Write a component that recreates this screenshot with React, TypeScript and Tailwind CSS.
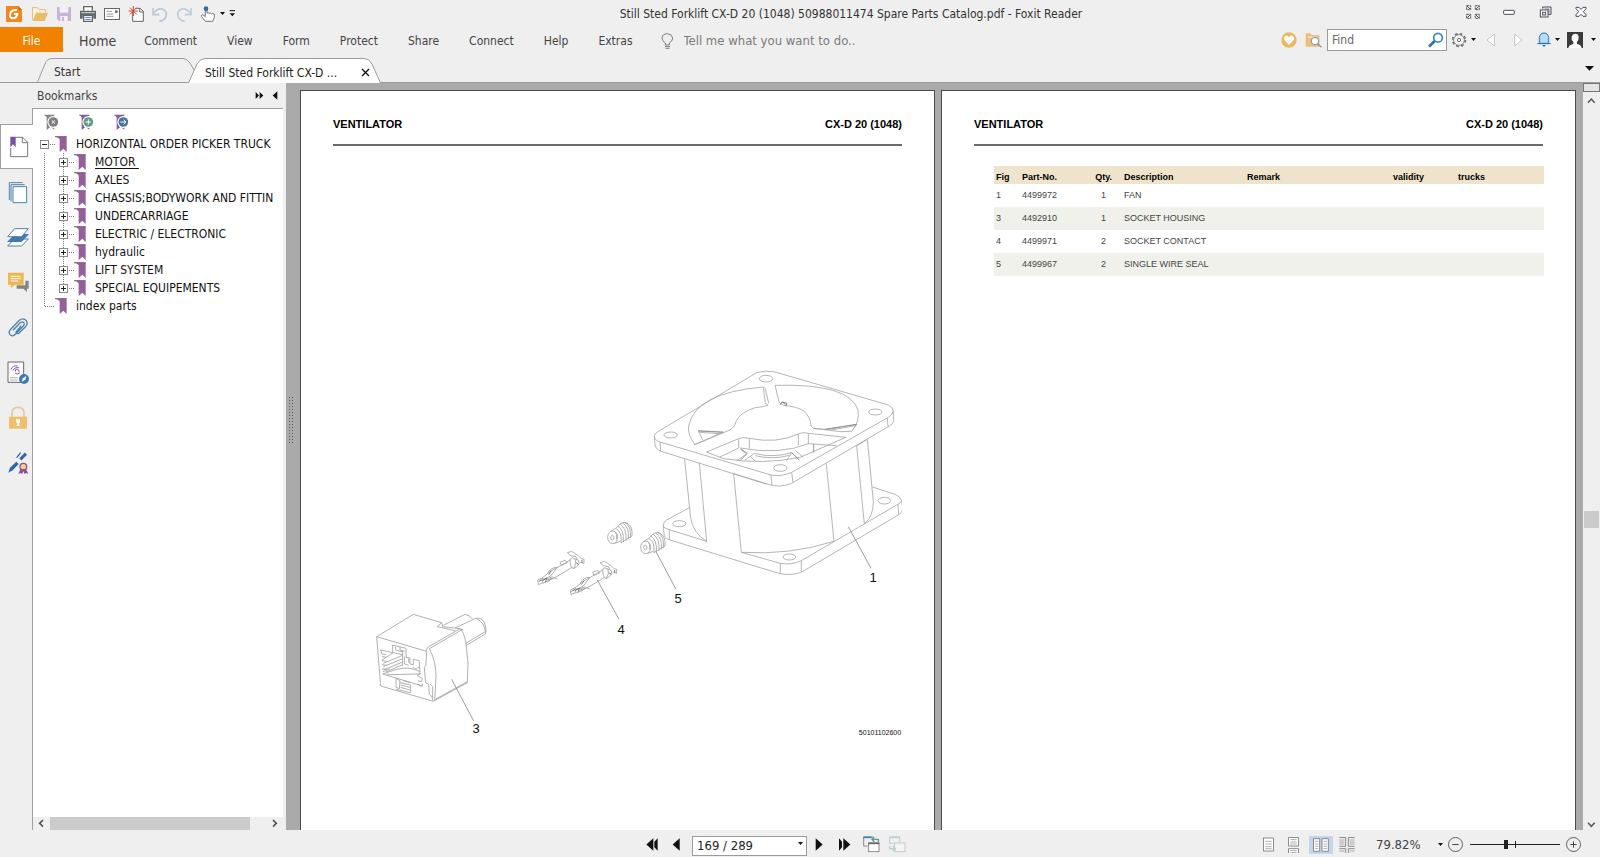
import React from 'react';

type GlyphProps = { w: number; h: number; children: React.ReactNode };

/* Small drawing canvas: three drawing units to every pixel. */
function Glyph({ w, h, children }: GlyphProps) {
  return (
    <svg width={w} height={h} viewBox={`0 0 ${w * 3} ${h * 3}`} fill="none" className="block shrink-0" aria-hidden="true">
      {children}
    </svg>
  );
}

function IconButton({ label, className = '', children }: { label: string; className?: string; children: React.ReactNode }) {
  return (
    <button type="button" aria-label={label} className={`flex shrink-0 items-center justify-center ${className}`}>
      {children}
    </button>
  );
}

function Caret() {
  return (
    <Glyph w={5} h={3}>
      <path d="M0 0H15L7.500 9Z" fill="#111" />
    </Glyph>
  );
}

function TitleBar() {
  return (
    <header className="flex h-[27px] items-center pr-3 pl-1.5">
      <div className="flex items-center gap-2">
        <Glyph w={16} h={16}>
          <rect width="48" height="48" fill="#f5861f" />
          <path d="M38 0H48V12Z" fill="#fff" />
          <path d="M38 0V12H48Z" fill="#c86a12" />
          <path d="M33 12Q14 10 12 26Q11 37 22 37Q32 36 34 24H24" stroke="#fff" strokeWidth="6" />
        </Glyph>
        <IconButton label="Open" className="ml-0.5">
          <Glyph w={16} h={16}>
            <path d="M1 43V5H17L22 11H41V20" fill="#fbf3e2" stroke="#e3b96c" strokeWidth="3" />
            <path d="M2 45L12 20H48L38 45Z" fill="#e9bc6c" />
          </Glyph>
        </IconButton>
        <IconButton label="Save">
          <Glyph w={16} h={16}>
            <path d="M3 3H45V45H9L3 39Z" fill="#c6b3d6" />
            <path d="M11 3H37V20H11Z" fill="#f3eef7" />
            <path d="M13 30H35V45H13Z" fill="#f3eef7" />
            <path d="M18 33H24V45H18Z" fill="#c6b3d6" />
          </Glyph>
        </IconButton>
        <IconButton label="Print">
          <Glyph w={16} h={16}>
            <path d="M11 14V2H37V14" fill="#fff" stroke="#666" strokeWidth="4" />
            <path d="M0 14H48V38H40V28H8V38H0Z" fill="#666" />
            <path d="M4 18H44V22H4Z" fill="#a9c6de" />
            <path d="M11 28H37V46H11Z" fill="#fff" stroke="#666" strokeWidth="4" />
            <path d="M16 34H32M16 40H32" stroke="#4a86b8" strokeWidth="3" />
          </Glyph>
        </IconButton>
        <IconButton label="Email">
          <Glyph w={16} h={16}>
            <rect x="1.500" y="7.500" width="45" height="33" fill="#fff" stroke="#666" strokeWidth="3" />
            <path d="M8 16H24M8 24H28M8 31H28" stroke="#888" strokeWidth="2.500" />
            <path d="M33 13H41V21H33Z" fill="#777" />
          </Glyph>
        </IconButton>
        <IconButton label="New">
          <Glyph w={16} h={16}>
            <path d="M14 16V46H46V16L36 7H22" fill="#fff" stroke="#666" strokeWidth="3" />
            <path d="M35 7V18H46" stroke="#666" strokeWidth="3" />
            <path d="M16 0V30M2 15H30M6 5L26 25M26 5L6 25" stroke="#d5432f" strokeWidth="3" />
          </Glyph>
        </IconButton>
        <IconButton label="Undo">
          <Glyph w={16} h={16}>
            <path d="M6 20Q18 4 34 10Q48 20 40 36Q35 44 22 46" stroke="#b9c7da" strokeWidth="5" />
            <path d="M3 6V26H22" stroke="#b9c7da" strokeWidth="5" />
          </Glyph>
        </IconButton>
        <IconButton label="Redo">
          <Glyph w={16} h={16}>
            <path d="M42 20Q30 4 14 10Q0 20 8 36Q13 44 26 46" stroke="#bccdd9" strokeWidth="5" />
            <path d="M45 6V26H26" stroke="#bccdd9" strokeWidth="5" />
          </Glyph>
        </IconButton>
        <div className="flex items-center gap-1">
          <IconButton label="Hand">
            <Glyph w={16} h={16}>
              <path d="M16 8V32L8 26Q3 26 5 32L16 46H38L43 34V24Q36 20 34 24Q30 18 27 22Q23 18 21 22V8Q18 4 16 8Z" fill="#fff" stroke="#777" strokeWidth="3" />
              <circle cx="18" cy="8" r="7" fill="#2f6ea5" />
            </Glyph>
          </IconButton>
          <Caret />
          <Glyph w={7} h={7}>
            <path d="M2 2H18" stroke="#111" strokeWidth="3" />
            <path d="M2 10H18L10 19Z" fill="#111" />
          </Glyph>
        </div>
      </div>
      <h1 className="flex-1 text-center text-[12px] leading-4 text-[#333]">
        Still Sted Forklift CX-D 20 (1048) 50988011474 Spare Parts Catalog.pdf - Foxit Reader
      </h1>
      <div className="flex items-center gap-[22px] pb-1">
        <IconButton label="Full screen">
          <Glyph w={14} h={14}>
            <path d="M2 2H14V14H2ZM28 2H40V14H28ZM2 28H14V40H2ZM28 28H40V40H28Z" stroke="#555" strokeWidth="3" strokeDasharray="7 2" />
            <path d="M4 4L12 12M38 4L30 12M4 38L12 30M38 38L30 30" stroke="#555" strokeWidth="3" />
          </Glyph>
        </IconButton>
        <IconButton label="Minimize">
          <Glyph w={14} h={14}>
            <rect x="5" y="16" width="32" height="12" rx="2" fill="#fff" stroke="#4a4a5c" strokeWidth="3" />
          </Glyph>
        </IconButton>
        <IconButton label="Restore">
          <Glyph w={14} h={14}>
            <path d="M14 11V6H39V28H30" stroke="#4a4a5c" strokeWidth="3" />
            <path d="M20 12H33V24" stroke="#4a4a5c" strokeWidth="2" />
            <rect x="7" y="15" width="23" height="21" fill="#fff" stroke="#4a4a5c" strokeWidth="3" />
            <rect x="14" y="22" width="9" height="8" stroke="#4a4a5c" strokeWidth="3" />
          </Glyph>
        </IconButton>
        <IconButton label="Close">
          <Glyph w={14} h={14}>
            <path d="M6 7H15L21 13L27 7H36V11L28 20L36 29V34H27L21 28L15 34H6V29L14 20L6 11Z" fill="#fff" stroke="#4a4a5c" strokeWidth="3" />
          </Glyph>
        </IconButton>
      </div>
    </header>
  );
}

const MENU = ['Comment', 'View', 'Form', 'Protect', 'Share', 'Connect', 'Help', 'Extras'];

function MenuBar() {
  return (
    <div className="flex h-[25px] items-center pr-1">
      <nav className="flex items-center gap-[30px] text-[12px] text-[#444]">
        <button type="button" className="-mr-3.5 h-[25px] w-[63px] bg-[#f08200] pt-0.5 text-white">File</button>
        <button type="button" className="-mr-0.5 pt-0.5 text-[14px] leading-5">Home</button>
        {MENU.map((m) => (
          <button type="button" key={m} className="pt-0.5">{m}</button>
        ))}
      </nav>
      <label className="ml-7 flex flex-1 items-center gap-2.5 pt-0.5">
        <Glyph w={13} h={16}>
          <path d="M13 36V30Q3 24 3 15Q5 2 19 2Q33 3 35 15Q35 24 25 30V36Z" stroke="#666" strokeWidth="2.500" />
          <path d="M12 41H27M14 46H25" stroke="#666" strokeWidth="2.500" />
        </Glyph>
        <input aria-label="Tell me what you want to do" placeholder="Tell me what you want to do.." className="w-56 bg-transparent text-[13px] leading-4 outline-none placeholder:text-[#7b7b7b]" />
      </label>
      <div className="flex items-center gap-2">
        <IconButton label="Favourites">
          <Glyph w={16} h={16}>
            <circle cx="24" cy="24" r="23" fill="#edb75e" />
            <path d="M24 39L10 24Q6 14 15 11Q21 10 24 16Q27 10 33 11Q42 14 38 24Z" fill="#fff" />
          </Glyph>
        </IconButton>
        <IconButton label="Search folder">
          <Glyph w={17} h={16}>
            <path d="M2 4H16L20 9H43V44H2Z" fill="#ecc07b" />
            <path d="M9 15H37" stroke="#f8e6c8" strokeWidth="4" />
            <circle cx="30" cy="27" r="11" fill="#fff" stroke="#9b9b9b" strokeWidth="3.500" />
            <path d="M38 35L49 46" stroke="#8f8f8f" strokeWidth="4" />
          </Glyph>
        </IconButton>
        <div className="-ml-[3px] flex h-[22px] w-[120px] items-center border border-[#9b9b9b] bg-white pr-0.5 pl-1">
          <input aria-label="Find" placeholder="Find" className="w-0 flex-1 bg-transparent text-[12px] outline-none placeholder:text-[#666]" />
          <IconButton label="Search">
            <Glyph w={16} h={16}>
              <circle cx="30" cy="17" r="13" stroke="#3f86b8" strokeWidth="5" />
              <path d="M20 27L3 44" stroke="#2f6ea5" strokeWidth="8" />
            </Glyph>
          </IconButton>
        </div>
      </div>
      <div className="ml-1 flex items-center">
        <IconButton label="Settings">
          <Glyph w={16} h={16}>
            <circle cx="24" cy="24" r="19" stroke="#444" strokeWidth="5" strokeDasharray="7.460 7.460" />
            <circle cx="24" cy="24" r="16" fill="#f4f4f4" stroke="#555" strokeWidth="2" />
            <circle cx="24" cy="24" r="19" stroke="#f4f4f4" strokeWidth="2" strokeDasharray="4 10.920" strokeDashoffset="-1.700" />
            <circle cx="24" cy="24" r="5" stroke="#555" strokeWidth="2.500" />
          </Glyph>
        </IconButton>
        <span className="w-1" />
        <Caret />
        <IconButton label="Previous" className="ml-2.5">
          <Glyph w={9} h={14}>
            <path d="M25 3V39L3 21Z" fill="#fff" stroke="#aaa" strokeWidth="2" />
          </Glyph>
        </IconButton>
        <IconButton label="Next" className="ml-[19px]">
          <Glyph w={9} h={14}>
            <path d="M2 3V39L24 21Z" fill="#fff" stroke="#aaa" strokeWidth="2" />
          </Glyph>
        </IconButton>
        <IconButton label="Notifications" className="mr-1 ml-3.5">
          <Glyph w={14} h={15}>
            <path d="M7 34V17Q9 3 21 3Q33 3 35 17V34Z" fill="#b4dcf6" stroke="#2f6ea5" strokeWidth="3" />
            <path d="M1 35H41" stroke="#2f6ea5" strokeWidth="3" />
            <path d="M15 39H27L21 45Z" fill="#2f6ea5" />
          </Glyph>
        </IconButton>
        <Caret />
        <IconButton label="Account" className="mr-2 ml-[7px]">
          <Glyph w={16} h={16}>
            <rect width="48" height="48" fill="#3b3b3b" />
            <path d="M4 48Q5 39 19 36V30Q12 24 14 14Q17 5 25 5Q35 6 35 16Q35 25 30 30V36Q42 38 44 48Z" fill="#fff" />
          </Glyph>
        </IconButton>
        <Caret />
      </div>
    </div>
  );
}

function TabStrip() {
  return (
    <div className="flex h-[31px] items-end border-b border-[#9b9b9b] pr-1.5 pl-[37px]">
      <button type="button" className="relative h-6 w-[157px] pt-1 pl-[17px] text-left text-[12px] text-[#333]">
        <svg viewBox="0 0 157 24" preserveAspectRatio="none" fill="none" className="absolute inset-0 size-full" aria-hidden="true">
          <path d="M0.500 24L8 6Q10 0.500 15 0.500H146Q150 0.500 153 5L157 12" stroke="#9b9b9b" />
        </svg>
        <span className="relative">Start</span>
      </button>
      <div className="relative -mb-px -ml-1.5 flex h-[25px] w-[193px] items-center pt-1 pr-[11px] pl-[17px] text-[12px] text-[#222]">
        <svg viewBox="0 0 193 25" preserveAspectRatio="none" className="absolute inset-0 size-full" aria-hidden="true">
          <path d="M0.500 25L9 6Q12 0.500 17 0.500H176Q181 0.500 184 6L192.500 25" fill="#fff" stroke="#9b9b9b" />
        </svg>
        <span className="relative flex-1">Still Sted Forklift CX-D ...</span>
        <IconButton label="Close tab" className="relative">
          <Glyph w={9} h={9}>
            <path d="M3 3L24 24M24 3L3 24" stroke="#111" strokeWidth="4" />
          </Glyph>
        </IconButton>
      </div>
      <IconButton label="Tab list" className="mb-[11px] ml-auto">
        <Glyph w={9} h={5}>
          <path d="M0 0H27L13.500 14Z" fill="#111" />
        </Glyph>
      </IconButton>
    </div>
  );
}

const RAIL: { label: string; icon: React.ReactNode }[] = [
  {
    label: 'Bookmarks',
    icon: (
      <Glyph w={20} h={23}>
        <path d="M19 4H41L56 19V62H5V36" fill="#fff" stroke="#777" strokeWidth="3" />
        <path d="M40 4V20H56" stroke="#777" strokeWidth="3" />
        <path d="M4 2H20V34L12 25L4 34Z" fill="#7b4f9f" />
      </Glyph>
    ),
  },
  {
    label: 'Pages',
    icon: (
      <Glyph w={20} h={22}>
        <path d="M4 54V2H44M9 58V8H50" stroke="#4f81b0" strokeWidth="3" />
        <path d="M15 14H56V62H15Z" fill="#fff" stroke="#4f81b0" strokeWidth="3" />
      </Glyph>
    ),
  },
  {
    label: 'Layers',
    icon: (
      <Glyph w={22} h={20}>
        <path d="M2 54L22 33H64L44 54Z" fill="#fff" stroke="#4f81b0" strokeWidth="3" />
        <path d="M0 42L23 18H66L44 42Z" fill="#3f7ab3" />
        <path d="M2 26L23 2H64L44 26Z" fill="#fff" stroke="#4f81b0" strokeWidth="3" />
      </Glyph>
    ),
  },
  {
    label: 'Comments',
    icon: (
      <Glyph w={21} h={21}>
        <path d="M52 26H62V50H57V60L46 50H26V40H52Z" fill="#858585" />
        <path d="M0 2H47V38H20L9 48V38H0Z" fill="#eeb550" />
        <path d="M8 13H38M8 20H38M8 27H30" stroke="#fff" strokeWidth="3" />
      </Glyph>
    ),
  },
  {
    label: 'Attachments',
    icon: (
      <Glyph w={20} h={20}>
        <path d="M15 37L36 15Q44 8 48 15Q50 20 45 25L22 49Q13 58 6 50Q0 42 8 34L34 7Q46-2 55 8Q61 18 52 27L32 46Q25 49 24 42L40 23" stroke="#4f81b0" strokeWidth="4" />
      </Glyph>
    ),
  },
  {
    label: 'Signatures',
    icon: (
      <Glyph w={23} h={23}>
        <path d="M3 3H50V64H3Z" fill="#fff" stroke="#666" strokeWidth="3" />
        <path d="M12 26Q16 12 32 15M18 29Q21 18 36 20M26 32Q22 25 30 24Q38 25 36 34M24 36Q30 42 38 36" stroke="#9257ad" strokeWidth="3" />
        <path d="M9 50H32M9 57H32" stroke="#888" strokeWidth="2" />
        <circle cx="51" cy="54" r="15" fill="#3f7ab3" />
        <path d="M44 62L47 52L58 45L55 56Z" fill="#fff" />
      </Glyph>
    ),
  },
  {
    label: 'Security',
    icon: (
      <Glyph w={18} h={23}>
        <path d="M9 33V20Q10 4 27 4Q44 4 45 20V33" stroke="#e5c99a" strokeWidth="5" />
        <path d="M0 32H54V68H0Z" fill="#efbf6c" />
        <path d="M22 40H33V50L30 51L32 60H23L25 51L22 50Z" fill="#fff" />
      </Glyph>
    ),
  },
  {
    label: 'Digital sign',
    icon: (
      <Glyph w={21} h={23}>
        <path d="M37 25L54 8" stroke="#2f68a8" strokeWidth="9" />
        <path d="M26 20L38 5" stroke="#2f68a8" strokeWidth="4" />
        <path d="M1 65L6 50L25 32L32 39L14 58Z" fill="#2f68a8" />
        <circle cx="46" cy="47" r="10" fill="#f7cf83" stroke="#8b4f9f" strokeWidth="4" />
        <path d="M37 54L31 69L38 66L43 69L46 60L50 69L55 66L61 69L54 54Z" fill="#8b4f9f" />
      </Glyph>
    ),
  },
];

function Rail() {
  return (
    <nav aria-label="Panels" className="flex w-8 shrink-0 flex-col pt-[41px]">
      {RAIL.map((r, i) => (
        <IconButton
          key={r.label}
          label={r.label}
          className={i === 0 ? 'relative z-10 -mr-px h-[45px] border-y border-l border-[#a0a0a0] bg-white pt-0.5 pl-1' : 'h-[45px] pt-0.5 pl-1'}
        >
          {r.icon}
        </IconButton>
      ))}
    </nav>
  );
}

function Flag() {
  return (
    <Glyph w={12} h={18}>
      <path d="M0 4H35V51L25 41L14 51V13Q9 6 0 6Z" fill="#93609a" />
      <path d="M0 5H35" stroke="#7d5a83" strokeWidth="2" />
    </Glyph>
  );
}

const DOT = { stroke: '#777', strokeWidth: 3, strokeDasharray: '3 3' };

function Guide({ last = false }: { last?: boolean }) {
  return (
    <Glyph w={last ? 22 : 19} h={18}>
      <path d={last ? 'M34.500 0V27' : 'M34.500 0V54'} {...DOT} />
      {last && <path d="M36 28.500H66" {...DOT} />}
    </Glyph>
  );
}

function Expander({ open = false, top = true, bottom = true, name }: { open?: boolean; top?: boolean; bottom?: boolean; name: string }) {
  return (
    <button type="button" aria-label={`${open ? 'Collapse' : 'Expand'} ${name}`} aria-expanded={open}>
      <Glyph w={22} h={18}>
        {top && <path d="M34.500 0V15" {...DOT} />}
        {bottom && <path d="M34.500 42V54" {...DOT} />}
        <path d="M51 28.500H66" {...DOT} />
        <rect x="22.500" y="16.500" width="24" height="24" fill="#fff" stroke="#8a8a8a" strokeWidth="3" />
        <path d={open ? 'M27 28.500H42' : 'M27 28.500H42M34.500 21V36'} stroke="#222" strokeWidth="3" />
      </Glyph>
    </button>
  );
}

const CHILDREN = ['MOTOR', 'AXLES', 'CHASSIS;BODYWORK AND FITTIN', 'UNDERCARRIAGE', 'ELECTRIC / ELECTRONIC', 'hydraulic', 'LIFT SYSTEM', 'SPECIAL EQUIPEMENTS'];

function BookmarkTool({ label, flag, disc, mark }: { label: string; flag: string; disc: string; mark: string }) {
  return (
    <IconButton label={label}>
      <Glyph w={15} h={17}>
        <path d="M0 2H31V47L20 38L8 48V10Q6 5 0 4Z" fill={flag} />
        <circle cx="28" cy="24" r="18" fill="#fff" />
        <circle cx="28" cy="24" r="14.500" fill={disc} />
        <path d={mark} stroke="#fff" strokeWidth="3" />
      </Glyph>
    </IconButton>
  );
}

function Bookmarks() {
  return (
    <aside className="flex w-[254px] shrink-0 flex-col pr-[3px]">
      <div className="flex h-[25px] items-center px-[5px]">
        <h2 className="flex-1 text-[12px] text-[#444]">Bookmarks</h2>
        <IconButton label="Expand panel">
          <Glyph w={9} h={9}>
            <path d="M2 3V24L12 13.500ZM14 3V24L25 13.500Z" fill="#111" />
          </Glyph>
        </IconButton>
        <IconButton label="Collapse panel" className="ml-2">
          <Glyph w={6} h={9}>
            <path d="M16 1V26L2 13.500Z" fill="#111" />
          </Glyph>
        </IconButton>
      </div>
      <div className="flex min-h-0 flex-1 flex-col overflow-hidden border-t border-l border-[#a0a0a0] bg-white">
        <div className="flex h-[26px] items-center gap-5 pl-[11px]">
          <BookmarkTool label="Delete bookmark" flag="#858585" disc="#7d7d7d" mark="M23 19L33 29M33 19L23 29" />
          <BookmarkTool label="Add bookmark" flag="#855a9f" disc="#5f9c83" mark="M20 24H36M28 16V32" />
          <BookmarkTool label="Go to bookmark" flag="#855a9f" disc="#42729f" mark="M19 24H35M29 17L36 24L29 31" />
        </div>
        <ul className="min-h-0 flex-1 text-[12px] leading-[18px] whitespace-nowrap text-[#111]">
          <li className="flex">
            <Expander open top={false} bottom={false} name="HORIZONTAL ORDER PICKER TRUCK" />
            <Flag />
            <a href="#truck" className="ml-[9px]">HORIZONTAL ORDER PICKER TRUCK</a>
          </li>
          {CHILDREN.map((c, i) => (
            <li key={c} className="flex">
              <Guide />
              <Expander name={c} bottom={i < CHILDREN.length - 1} />
              <Flag />
              <a href={`#section-${i}`} className={i === 0 ? 'ml-[9px] whitespace-pre underline underline-offset-2' : 'ml-[9px]'}>
                {i === 0 ? `${c} ` : c}
              </a>
            </li>
          ))}
          <li className="flex">
            <Guide last />
            <Flag />
            <a href="#index" className="ml-[9px]">index parts</a>
          </li>
        </ul>
        <div className="flex h-[13px] items-center justify-between bg-[#efefef] px-[5px]">
          <IconButton label="Scroll left">
            <Glyph w={6} h={9}>
              <path d="M15 3L5 13L15 23" stroke="#555" strokeWidth="5" />
            </Glyph>
          </IconButton>
          <div className="mr-[22px] ml-1.5 h-full flex-1 bg-[#cbcbcb]" />
          <IconButton label="Scroll right">
            <Glyph w={6} h={9}>
              <path d="M3 3L13 13L3 23" stroke="#555" strokeWidth="5" />
            </Glyph>
          </IconButton>
        </div>
      </div>
    </aside>
  );
}

function ContactPin() {
  return (
    <g>
      <path d="M533 150L548 143V158L535 164ZM548 143L570 125L600 108L630 90M548 160L590 140L636 112M540 148L562 146L578 140M563 130Q572 112 592 112L572 138L550 150M560 150L582 143L593 148M563 156L576 146" />
      <path d="M600 97L615 91L622 98L604 106ZM630 88Q636 80 644 86Q652 98 640 116Q630 112 630 88M644 86L656 92Q662 102 650 110L640 116M622 68L635 64L656 78L664 86L672 88V100L660 96M622 68L632 77L648 80L652 90M648 98L656 104" />
      <path d="M536 154L546 150M548 152L560 144L556 158M566 134L574 122M650 98L655 103M666 90V98" stroke="#666" />
    </g>
  );
}

function Seal() {
  return (
    <g>
      <ellipse cx="857" cy="52" rx="15" ry="19" />
      <ellipse cx="856" cy="53" rx="5" ry="7" />
      <path d="M850 35L866 25M863 70L880 64M862 34Q872 42 868 58" />
      <path d="M866 25Q886 36 882 68M872 18Q892 30 889 66M879 12Q900 26 897 62M886 8Q908 22 904 58M893 7Q914 18 910 54M900 9Q918 20 915 48M866 25L880 11Q892 4 902 10M882 68L915 48" />
    </g>
  );
}

/* Exploded view of the fan, its socket housing, contacts and seals. */
function FanDrawing() {
  return (
    <svg viewBox="333 360 569 385" className="mt-[214px] block h-auto w-full" role="img" aria-label="Exploded view of the fan" fontFamily="'Liberation Sans', Arial, sans-serif">
      <g transform="translate(640 350) scale(0.33333)" fill="none" stroke="#a6a6a6" strokeWidth="2.500" strokeLinejoin="round">
        <path d="M43 258Q43 252 52 246L350 68Q375 60 405 66L745 165Q760 172 760 185L761 212Q760 222 748 228L455 400Q420 415 380 402L60 303Q47 297 45 285Z" />
        <path d="M43 260Q45 272 60 276L393 375Q425 381 455 367L745 202Q760 192 760 182M60 276L62 304M393 375L396 406M455 367L459 398M742 204L744 230" />
        <ellipse cx="378" cy="86" rx="20" ry="10" />
        <ellipse cx="92" cy="255" rx="20" ry="9" />
        <ellipse cx="706" cy="186" rx="20" ry="9" />
        <ellipse cx="421" cy="354" rx="20" ry="10" />
        <ellipse cx="118" cy="521" rx="20" ry="9" />
        <ellipse cx="733" cy="452" rx="19" ry="10" />
        <ellipse cx="448" cy="621" rx="19" ry="9" />
        <path d="M370 111L376 160L384 165Q376 170 345 173Q298 188 288 215Q284 234 265 242L165 284Q142 254 146 228Q166 128 370 111M375 113L386 160" />
        <path d="M405 106L418 158L430 166Q472 170 490 182Q512 200 513 228Q516 236 530 236L600 245L635 244Q660 215 654 180Q630 100 405 106" />
        <path d="M421 164L426 156L441 160L437 168M428 156L436 164" stroke="#666" />
        <path d="M163 284L200 268L250 246L175 242L188 270M178 247L238 251M520 236L560 238L650 223L640 236M560 238L598 232M570 241L645 227" />
        <path d="M555 238L650 223M175 243L248 247" stroke="#888" />
        <path d="M200 306L296 266Q308 260 328 265Q410 282 475 252Q488 245 505 250L618 262L480 322Q370 345 250 326ZM296 268V294M328 265V296M475 252V286M505 250V282M300 294Q420 316 505 281L590 287M240 321L296 294M302 298L320 312L290 332M315 330L343 310Q400 325 455 308L440 332M455 308L478 330M467 302L490 322M330 318L345 333M345 317Q400 330 448 316" />
        <path d="M521 282V308M302 297L322 310M300 332L322 310M455 308L478 330" stroke="#888" />
        <path d="M134 328L152 505Q160 550 200 574L178 338M281 371L304 607Q450 616 582 574L559 341M281 371L380 402M650 288L673 521Q700 500 700 455L682 268M650 288L682 268" />
        <path d="M148 473L80 510Q69 516 70 528L73 560Q76 566 90 570L400 665Q445 682 485 666L775 495Q789 487 788 475L785 452Q780 438 765 433L697 411M70 528Q72 536 88 539L200 574M304 607L421 640Q455 646 484 632L770 465Q784 458 785 452M88 539V569M421 640V670M484 632V666M774 463L776 494" />
        <path d="M625 530L693 655" stroke="#888" />
      </g>
      <g transform="translate(360 530) scale(0.33333)" fill="none" stroke="#a0a0a0" strokeWidth="2.500" strokeLinejoin="round">
        <path d="M50 320L160 253L245 278L232 290L285 302M245 278L248 290L300 296M250 286L315 253Q332 256 338 268M285 294L345 266Q362 260 372 276Q382 300 376 312M350 266Q374 278 376 305L317 340M376 312L318 347" />
        <path d="M50 320L200 364M50 320L62 468L220 514L322 458Q328 400 318 340Q312 305 300 296L208 349Q197 354 200 364L198 405L193 412L197 458L206 463L208 493L216 500L218 512M208 356Q228 392 228 440L224 512M208 356L308 298M210 462L218 470V505M226 508L322 455M300 296L310 300" />
        <path d="M62 360L98 368V345L138 355V382L150 384V402L160 404V388L178 392L180 432L172 436L187 446L185 455L174 452M62 360L66 372L78 374M66 380L80 382M66 392L80 394M66 404L80 406M66 416L80 418M68 432L110 418Q150 408 180 425M68 432L187 468V460M68 426L90 416M80 434L182 432M172 462L187 470" />
        <path d="M66 390L100 368L128 374M70 400L128 376M70 410L128 386M70 420L128 396M78 426L128 404M128 362V408M134 380V402L146 406M146 386V398M107 350V360L128 366M120 350V360L134 364M160 412L168 418L178 410" />
        <path d="M108 445V472L118 476L120 452L108 445M120 458L152 465V488L108 478M122 465L150 472M122 472L150 480M130 452L152 458" />
        <ContactPin />
        <g transform="translate(98 30)">
          <ContactPin />
        </g>
        <Seal />
        <g transform="translate(-99 -30)">
          <Seal />
        </g>
        <path d="M275 448L341 573M712 150L777 268M888 65L948 178" stroke="#888" />
      </g>
      <g fill="#111" fontSize="13" textAnchor="middle">
        <text x="873" y="582">1</text>
        <text x="678" y="603">5</text>
        <text x="621" y="634">4</text>
        <text x="476" y="733">3</text>
        <text x="880" y="735" fontSize="7">50101102600</text>
      </g>
    </svg>
  );
}

function Sheet({ children }: { children: React.ReactNode }) {
  return (
    <article className="min-w-0 flex-1 overflow-hidden border-x border-t border-[#4a4a4a] bg-white px-8 font-['Liberation_Sans',Arial,sans-serif]">
      <div className="mt-[25px] flex justify-between border-b-2 border-[#6a6a6a] pb-3 text-[11px] leading-4 font-bold text-black">
        <h3>VENTILATOR</h3>
        <span>CX-D 20 (1048)</span>
      </div>
      {children}
    </article>
  );
}

const PARTS = [
  { fig: 1, no: '4499972', qty: 1, text: 'FAN' },
  { fig: 3, no: '4492910', qty: 1, text: 'SOCKET HOUSING' },
  { fig: 4, no: '4499971', qty: 2, text: 'SOCKET CONTACT' },
  { fig: 5, no: '4499967', qty: 2, text: 'SINGLE WIRE SEAL' },
];

function PartsTable() {
  return (
    <div className="-mr-px mt-5 pl-5">
      <table className="w-full table-fixed border-collapse text-left text-[9px] leading-[10px] text-[#444]">
        <thead className="text-black">
          <tr className="h-[18px] bg-[#efe4cb] align-bottom">
            <th scope="col" className="w-[28px] pb-0.5 pl-0.5">Fig</th>
            <th scope="col" className="w-[60px] pb-0.5">Part-No.</th>
            <th scope="col" className="w-[42px] pr-3 pb-0.5 text-right">Qty.</th>
            <th scope="col" className="w-[123px] pb-0.5">Description</th>
            <th scope="col" className="w-[146px] pb-0.5">Remark</th>
            <th scope="col" className="w-[65px] pb-0.5">validity</th>
            <th scope="col" className="pb-0.5">trucks</th>
          </tr>
        </thead>
        <tbody>
          {PARTS.map((p) => (
            <tr key={p.fig} className="h-[23px] even:bg-[#f1f1eb]">
              <td className="pb-0.5 pl-0.5">{p.fig}</td>
              <td className="pb-0.5">{p.no}</td>
              <td className="pr-[18px] pb-0.5 text-right">{p.qty}</td>
              <td className="pb-0.5">{p.text}</td>
              <td />
              <td />
              <td />
            </tr>
          ))}
        </tbody>
      </table>
    </div>
  );
}

function Viewer() {
  return (
    <main className="flex min-w-0 flex-1 bg-[#a9aaa9]">
      <div className="flex w-3.5 shrink-0 items-center pl-0.5">
        <svg width="5" height="46" className="-mt-[74px]" aria-hidden="true">
          <path d="M1.500 0V46M4.500 0V46" stroke="#555" strokeDasharray="1 2" />
        </svg>
      </div>
      <div className="flex min-w-0 flex-1 gap-1.5 pt-[7px] pr-[7px]">
        <Sheet>
          <FanDrawing />
        </Sheet>
        <Sheet>
          <PartsTable />
        </Sheet>
      </div>
      <div className="flex w-[17px] shrink-0 flex-col items-center bg-[#efefef]">
        <div className="h-[9px] w-full border border-[#777] bg-[#e4e4e4]" />
        <IconButton label="Scroll up" className="mt-[5px]">
          <Glyph w={9} h={7}>
            <path d="M3 17L13 6L23 17" stroke="#555" strokeWidth="4.500" />
          </Glyph>
        </IconButton>
        <div className="grow-[408]" />
        <div className="h-[17px] w-[15px] bg-[#cbcbcb]" />
        <div className="grow-[294]" />
        <IconButton label="Scroll down" className="mb-0.5">
          <Glyph w={9} h={7}>
            <path d="M3 5L13 16L23 5" stroke="#555" strokeWidth="4.500" />
          </Glyph>
        </IconButton>
      </div>
    </main>
  );
}

function StatusBar() {
  return (
    <footer className="flex h-[27px] shrink-0 items-center pr-[19px] pl-[40%]">
      <div className="flex items-center pt-0.5 pl-1.5">
        <IconButton label="First page">
          <Glyph w={13} h={13}>
            <path d="M22 1V38L1 19.500ZM35 1V38L25 28V11Z" fill="#111" />
          </Glyph>
        </IconButton>
        <IconButton label="Previous page" className="ml-[13px]">
          <Glyph w={8} h={13}>
            <path d="M23 1V38L2 19.500Z" fill="#111" />
          </Glyph>
        </IconButton>
        <div className="relative ml-3">
          <select aria-label="Page" className="h-5 w-[115px] appearance-none border border-[#9b9b9b] bg-white pl-1 text-[13px] leading-4 text-[#222]">
            <option>169 / 289</option>
          </select>
          <span className="pointer-events-none absolute top-[9px] right-1">
            <Caret />
          </span>
        </div>
        <IconButton label="Next page" className="ml-2">
          <Glyph w={8} h={13}>
            <path d="M2 1V38L23 19.500Z" fill="#111" />
          </Glyph>
        </IconButton>
        <IconButton label="Last page" className="ml-[15px]">
          <Glyph w={13} h={13}>
            <path d="M16 1V38L37 19.500ZM3 1V38L12 28V11Z" fill="#111" />
          </Glyph>
        </IconButton>
        <IconButton label="Previous view" className="ml-3">
          <Glyph w={17} h={17}>
            <path d="M14 30H2V3H30" stroke="#777" strokeWidth="2.500" />
            <path d="M1 4H26" stroke="#3f86b8" strokeWidth="5" />
            <rect x="17" y="21" width="31" height="26" fill="#fff" stroke="#777" strokeWidth="2.500" />
            <path d="M16 22H49" stroke="#666" strokeWidth="5" />
            <path d="M46 18V10H28M34 3L27 10L34 17" stroke="#5f9c83" strokeWidth="4" />
          </Glyph>
        </IconButton>
        <IconButton label="Next view" className="ml-[9px]">
          <Glyph w={17} h={17}>
            <path d="M14 22H2V3H32V18" stroke="#bbc4c8" strokeWidth="2.500" />
            <path d="M1 4H33" stroke="#bcd0dc" strokeWidth="5" />
            <rect x="17" y="21" width="31" height="26" fill="#f4f4f4" stroke="#c0c0c0" strokeWidth="2.500" />
            <path d="M2 30V38H18M12 31L19 38L12 45" stroke="#b7cec4" strokeWidth="4" />
          </Glyph>
        </IconButton>
      </div>
      <div className="ml-auto flex items-center pt-0.5">
        <IconButton label="Single page" className="mr-3.5">
          <Glyph w={11} h={15}>
            <rect x="1.500" y="3" width="30" height="39" fill="#fff" stroke="#777" strokeWidth="2.500" />
            <path d="M7 13H26M7 21H26M7 29H26M7 35H26" stroke="#888" strokeWidth="2" />
          </Glyph>
        </IconButton>
        <IconButton label="Continuous" className="mr-2.5">
          <Glyph w={11} h={16}>
            <path d="M1.500 1.500H31.500V27H1.500ZM1.500 48V35H31.500V48" fill="#fff" stroke="#777" strokeWidth="2.500" />
            <path d="M7 8H26M7 15H26M7 21H26M7 41H26M7 47H26" stroke="#888" strokeWidth="2" />
          </Glyph>
        </IconButton>
        <IconButton label="Facing" className="mr-1.5 h-[18px] w-6 bg-[#c5d3ec]">
          <Glyph w={16} h={14}>
            <path d="M1.500 2H20V40H1.500ZM27 2H46V40H27Z" fill="#fff" stroke="#777" strokeWidth="2.500" />
            <path d="M6 10H16M6 18H16M6 25H16M6 32H16M31 10H42M31 18H42M31 25H42M31 32H42" stroke="#888" strokeWidth="2" />
          </Glyph>
        </IconButton>
        <IconButton label="Continuous facing" className="mr-[21px]">
          <Glyph w={16} h={16}>
            <path d="M1 1.500H20V28H1M47 1.500H28V28H47M1 35H20V48M47 35H28V48" stroke="#777" strokeWidth="2.500" />
            <path d="M1 9H16M1 15H16M1 21H16M32 9H47M32 15H47M32 21H47M1 42H16M32 42H47" stroke="#888" strokeWidth="2" />
          </Glyph>
        </IconButton>
        <output className="w-[62px] text-[13px] leading-4 text-[#444]">79.82%</output>
        <Caret />
        <IconButton label="Zoom out" className="ml-[5px]">
          <Glyph w={15} h={15}>
            <circle cx="22.500" cy="22.500" r="21" stroke="#444" strokeWidth="2.500" />
            <path d="M13 22.500H32" stroke="#444" strokeWidth="3" />
          </Glyph>
        </IconButton>
        <div className="relative mr-1.5 ml-[7px] flex items-center">
          <input
            type="range"
            aria-label="Zoom"
            min={0}
            max={100}
            defaultValue={40}
            className="h-[9px] w-[90px] appearance-none bg-transparent [&::-webkit-slider-runnable-track]:h-px [&::-webkit-slider-runnable-track]:bg-[#222] [&::-webkit-slider-thumb]:-mt-1 [&::-webkit-slider-thumb]:h-[9px] [&::-webkit-slider-thumb]:w-1 [&::-webkit-slider-thumb]:appearance-none [&::-webkit-slider-thumb]:bg-[#222]"
          />
          <span className="absolute left-1/2 h-[7px] w-px bg-[#222]" />
        </div>
        <IconButton label="Zoom in">
          <Glyph w={15} h={15}>
            <circle cx="22.500" cy="22.500" r="21" stroke="#444" strokeWidth="2.500" />
            <path d="M13 22.500H32M22.500 13V32" stroke="#444" strokeWidth="3" />
          </Glyph>
        </IconButton>
      </div>
    </footer>
  );
}

export default function App() {
  return (
    <div className="flex h-screen flex-col overflow-hidden bg-[#efefef] font-['DejaVu_Sans_Condensed','DejaVu_Sans',sans-serif]">
      <TitleBar />
      <MenuBar />
      <TabStrip />
      <div className="flex min-h-0 flex-1">
        <Rail />
        <Bookmarks />
        <Viewer />
      </div>
      <StatusBar />
    </div>
  );
}
